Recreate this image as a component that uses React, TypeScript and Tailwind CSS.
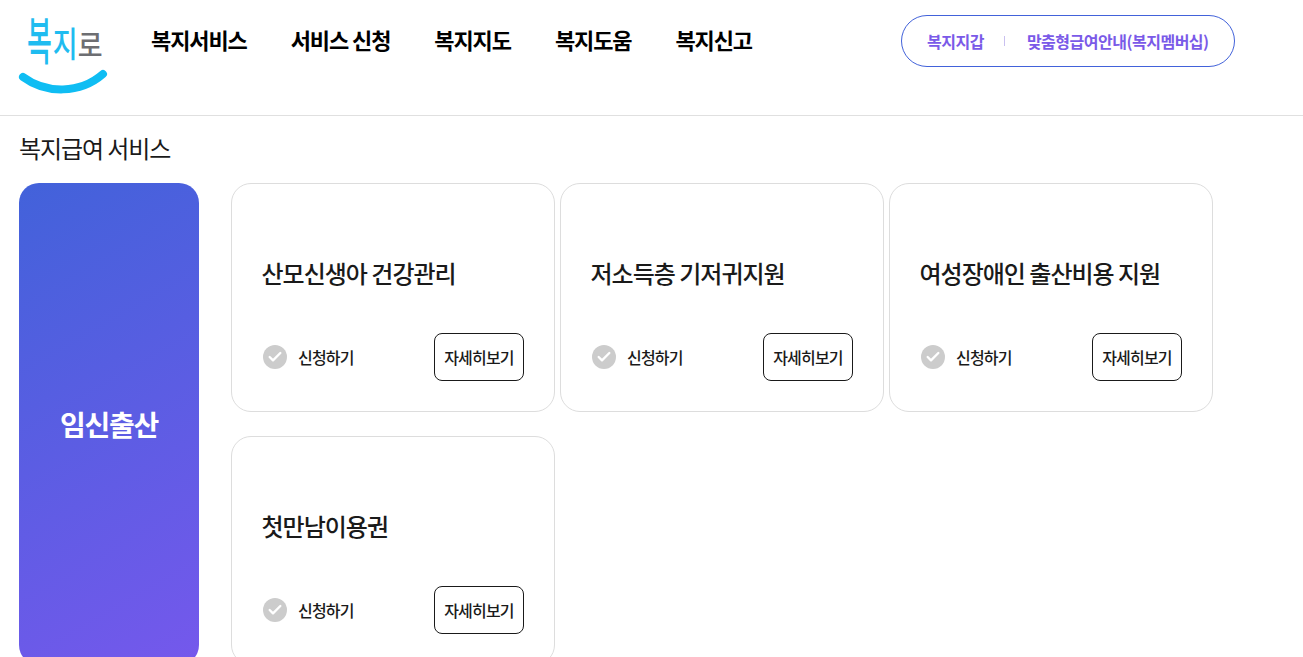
import { Check } from "lucide-react"

const navItems = ["복지서비스", "서비스 신청", "복지지도", "복지도움", "복지신고"]

const Logo = () => (
  <div className="relative w-[90px] h-[88px] shrink-0">
    <div className="flex items-start h-[60px] pl-[9px]">
      <span className="text-[27px] leading-[30px] font-medium text-[#1fbcf0] scale-y-[1.9] origin-top mt-[3px]">복</span>
      <span className="text-[27px] leading-[30px] font-medium text-[#1fbcf0] scale-y-[1.3] mt-[20px] ml-[1px]">지</span>
      <span className="text-[27px] leading-[30px] font-medium text-[#6d6e72] scale-y-[1.1] mt-[21px]">로</span>
    </div>
    <svg className="absolute left-0 top-[60px]" width="90" height="30" viewBox="0 0 90 30" fill="none">
      <path d="M5 9 C 28 26, 62 26, 85 6" stroke="#0fbdf3" strokeWidth="8" strokeLinecap="round" />
    </svg>
  </div>
)

const ServiceCard = ({ title }: { title: string }) => (
  <div className="w-[324px] h-[229px] border border-[#dddddd] rounded-[20px] bg-white pt-[72px] pl-[30px] pr-[30px] flex flex-col">
    <h3 className="text-[24px] leading-[34px] font-medium tracking-[-1px] -ml-[0.5px] text-[#1a1a1a] h-[34px]">{title}</h3>
    <div className="flex items-center justify-between mt-[43px]">
      <div className="flex items-center gap-[11px] pl-[1px]">
        <span className="w-[24px] h-[24px] rounded-full bg-[#cccccc] flex items-center justify-center">
          <Check size={16} strokeWidth={3.5} className="text-white" />
        </span>
        <span className="text-[16px] font-medium text-[#1a1a1a] tracking-[-0.8px]">신청하기</span>
      </div>
      <button className="w-[90px] h-[48px] border border-[#1a1a1a] rounded-[8px] text-[16px] font-medium text-[#1a1a1a] tracking-[-0.8px]">
        자세히보기
      </button>
    </div>
  </div>
)

export default function App() {
  return (
    <div className="h-screen overflow-hidden bg-white font-['Noto_Sans_CJK_KR','Noto_Sans',sans-serif]">
      <header className="h-[116px] border-b border-[#e0e0e0] flex items-start pl-[18px]">
        <div className="pt-[8px]">
          <Logo />
        </div>
        <nav className="flex gap-[44px] ml-[43px] pt-[24px]">
          {navItems.map((item) => (
            <a key={item} className="text-[22px] leading-[30px] font-semibold text-black tracking-[-1.1px]">
              {item}
            </a>
          ))}
        </nav>
        <div className="ml-[149px] mt-[15px] w-[334px] h-[52px] border border-[#4262da] rounded-full flex items-center pl-[25px] text-[16px] font-semibold text-[#7a5ae8] tracking-[-0.5px]">
          <span>복지지갑</span>
          <span className="w-px h-[10px] bg-[#c9c0f0] ml-[20px] mr-[22px]" />
          <span>맞춤형급여안내(복지멤버십)</span>
        </div>
      </header>
      <main className="pl-[19px]">
        <h2 className="text-[24px] leading-[32px] mt-[16px] text-[#1a1a1a] tracking-[-1.1px]">복지급여 서비스</h2>
        <div className="flex mt-[19px]">
          <div className="w-[180px] h-[482px] shrink-0 rounded-[20px] bg-linear-[150deg] from-[#4262da] to-[#7558ec] flex items-center justify-center">
            <span className="text-[28px] font-semibold text-white tracking-[-1.2px]">임신출산</span>
          </div>
          <div className="ml-[32px] grid grid-cols-[324px_324px_324px] gap-x-[5px] gap-y-[24px] content-start">
            <ServiceCard title="산모신생아 건강관리" />
            <ServiceCard title="저소득층 기저귀지원" />
            <ServiceCard title="여성장애인 출산비용 지원" />
            <ServiceCard title="첫만남이용권" />
          </div>
        </div>
      </main>
    </div>
  )
}
